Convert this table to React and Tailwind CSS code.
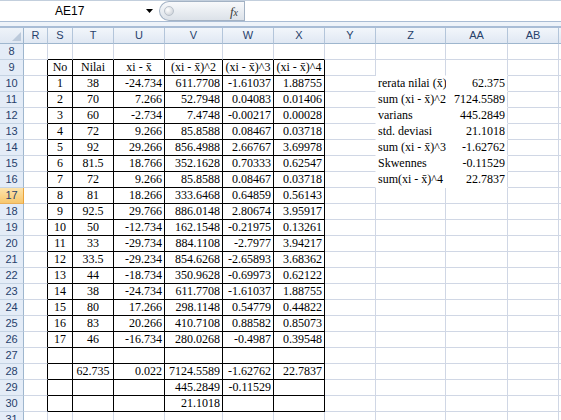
import clsx from "clsx";

const SERIF = "font-['Liberation_Serif','Times_New_Roman',serif]";
const SANS = "font-['Liberation_Sans',Arial,sans-serif]";
const XB = "x\u0304";

const COLS = ["R", "S", "T", "U", "V", "W", "X", "Y", "Z", "AA", "AB", ""];

// column index: R=0 S=1 T=2 U=3 V=4 W=5 X=6 Y=7 Z=8 AA=9 AB=10
const TABLE = {
  9: ["No", "Nilai", `xi - ${XB}`, `(xi - ${XB})^2`, `(xi - ${XB})^3`, `(xi - ${XB})^4`],
  10: ["1", "38", "-24.734", "611.7708", "-1.61037", "1.88755"],
  11: ["2", "70", "7.266", "52.7948", "0.04083", "0.01406"],
  12: ["3", "60", "-2.734", "7.4748", "-0.00217", "0.00028"],
  13: ["4", "72", "9.266", "85.8588", "0.08467", "0.03718"],
  14: ["5", "92", "29.266", "856.4988", "2.66767", "3.69978"],
  15: ["6", "81.5", "18.766", "352.1628", "0.70333", "0.62547"],
  16: ["7", "72", "9.266", "85.8588", "0.08467", "0.03718"],
  17: ["8", "81", "18.266", "333.6468", "0.64859", "0.56143"],
  18: ["9", "92.5", "29.766", "886.0148", "2.80674", "3.95917"],
  19: ["10", "50", "-12.734", "162.1548", "-0.21975", "0.13261"],
  20: ["11", "33", "-29.734", "884.1108", "-2.7977", "3.94217"],
  21: ["12", "33.5", "-29.234", "854.6268", "-2.65893", "3.68362"],
  22: ["13", "44", "-18.734", "350.9628", "-0.69973", "0.62122"],
  23: ["14", "38", "-24.734", "611.7708", "-1.61037", "1.88755"],
  24: ["15", "80", "17.266", "298.1148", "0.54779", "0.44822"],
  25: ["16", "83", "20.266", "410.7108", "0.88582", "0.85073"],
  26: ["17", "46", "-16.734", "280.0268", "-0.4987", "0.39548"],
  27: ["", "", "", "", "", ""],
  28: ["", "62.735", "0.022", "7124.5589", "-1.62762", "22.7837"],
  29: ["", "", "", "445.2849", "-0.11529", ""],
  30: ["", "", "", "21.1018", "", ""],
};

const STATS = {
  10: [`rerata nilai (${XB})`, "62.375"],
  11: [`sum (xi - ${XB})^2`, "7124.5589"],
  12: ["varians", "445.2849"],
  13: ["std. deviasi", "21.1018"],
  14: [`sum (xi - ${XB})^3`, "-1.62762"],
  15: ["Skwennes", "-0.11529"],
  16: [`sum(xi - ${XB})^4`, "22.7837"],
};

const ROWS = Array.from({ length: 24 }, (_, i) => i + 8);

const inTable = (r, c) => r >= 9 && r <= 30 && c >= 1 && c <= 6;
const filled = (r, c) => r >= 10 && r <= 16 && (c === 8 || c === 9);

function cellInfo(r, c) {
  let text = "";
  let align = "justify-start";

  if (inTable(r, c)) {
    text = TABLE[r][c - 1];
    if (r === 9 || c === 1 || c === 2) align = "justify-center";
    else align = "justify-end";
  } else if (filled(r, c)) {
    text = STATS[r][c - 8];
    align = c === 9 ? "justify-end" : "justify-start";
  }

  let right = "border-r-[#d0d7e5]";
  if (inTable(r, c) || inTable(r, c + 1)) right = "border-r-black";
  else if ((filled(r, c) && c === 8) || filled(r, c + 1)) right = "border-r-white";

  let bottom = "border-b-[#d0d7e5]";
  if (inTable(r, c) || inTable(r + 1, c)) bottom = "border-b-black";
  else if (filled(r, c) || filled(r + 1, c)) bottom = "border-b-white";

  return { text, align, right, bottom };
}

function FormulaBar() {
  return (
    <div className="flex h-[28px] flex-col">
      <div className="flex h-[22px] border-y border-t-[#c3cfdd] border-b-[#a9bcd4] bg-white">
        <div className="relative w-[159px]">
          <span className={`absolute left-[55px] top-[2px] text-[12px] leading-[16px] text-black ${SANS}`}>AE17</span>
          <svg className="absolute left-[146px] top-[8px]" width="8" height="5" viewBox="0 0 8 5">
            <path d="M0 0 H7 L3.5 4 Z" fill="#000" />
          </svg>
        </div>
        <div className="flex w-[85px] items-center justify-between rounded-l-[10px] border border-r-0 border-[#a3b2c4] bg-gradient-to-b from-[#f8f9fb] to-[#dce2e9] pl-[4px] pr-[6px]">
          <span className="h-[10px] w-[10px] rounded-full border border-[#b9c1cb] bg-[radial-gradient(circle_at_35%_35%,#ffffff,#c4cad2)]" />
          <span className="font-['Liberation_Serif',serif] text-[13px] italic leading-none text-[#3a3a3a]">
            f<span className="text-[10px]">x</span>
          </span>
        </div>
        <div className="flex-1 border-l border-l-[#a3b2c4]" />
      </div>
      <div className="h-[4px] bg-[#eef3f9]" />
      <div className="h-[2px] bg-[#a9bdd6]" />
    </div>
  );
}

export default function App() {
  return (
    <div className="h-[420px] w-[561px] overflow-hidden bg-white">
      <FormulaBar />
      <div className="grid auto-rows-[16px] grid-cols-[24px_24px_25px_41px_51px_58px_51px_51px_51px_70px_62px_51px_1fr]">
        <div className="relative border-r border-b border-r-[#9eb6ce] border-b-[#9eb6ce] bg-gradient-to-b from-[#eef3f9] to-[#dfe7f2]">
          <svg className="absolute right-[2px] bottom-[2px]" width="9" height="9" viewBox="0 0 9 9">
            <path d="M9 0 V9 H0 Z" fill="#bccadb" />
          </svg>
        </div>
        {COLS.map((name, i) => (
          <div
            key={`h-${i}`}
            className={`flex items-center justify-center border-r border-b border-r-[#b3c5da] border-b-[#9eb6ce] bg-gradient-to-b from-[#f2f6fb] to-[#e0e8f3] text-[11px] text-[#27416b] ${SANS}`}
          >
            {name}
          </div>
        ))}

        {ROWS.map((r) => [
          <div
            key={`rh-${r}`}
            className={clsx(
              "flex items-center justify-center border-r border-b text-[11px]",
              SANS,
              r === 17
                ? "border-r-[#e9a23b] border-b-[#e9b05a] bg-gradient-to-b from-[#fce3ab] to-[#f7c76d] text-[#27416b]"
                : "border-r-[#9eb6ce] border-b-[#c5d3e3] bg-[#e4ecf7] text-[#27416b]"
            )}
          >
            {r}
          </div>,
          ...COLS.map((_, c) => {
            const { text, align, right, bottom } = cellInfo(r, c);
            return (
              <div
                key={`${r}-${c}`}
                className={clsx(
                  "flex items-start overflow-visible whitespace-nowrap border-r border-b bg-white px-[2px] text-[12px] leading-[15px] text-black",
                  SERIF,
                  align,
                  right,
                  bottom
                )}
              >
                {text}
              </div>
            );
          }),
        ])}
      </div>
    </div>
  );
}
